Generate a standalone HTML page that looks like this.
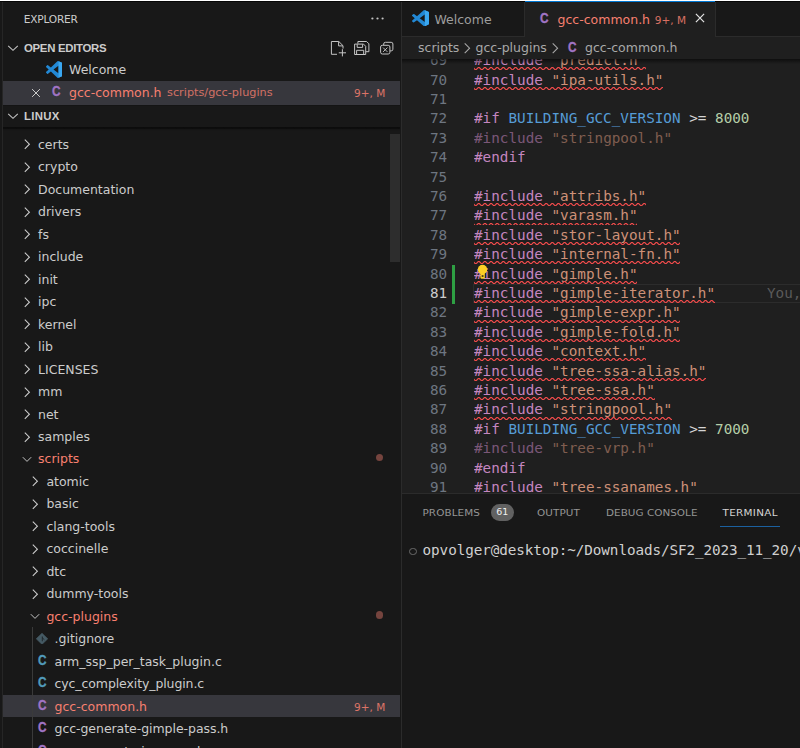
<!DOCTYPE html><html><head><meta charset="utf-8"><title>gcc-common.h - linux - Visual Studio Code</title><style>
html,body{margin:0;padding:0;background:#181818;}
body{width:800px;height:748px;overflow:hidden;position:relative;font-family:"DejaVu Sans", "Liberation Sans", sans-serif;color:#cccccc;}
.abs{position:absolute;}
.t{position:absolute;white-space:nowrap;line-height:1;}
#side{position:absolute;left:3px;top:0;width:398px;height:748px;background:#181818;overflow:hidden;}
#editor{position:absolute;left:402px;top:0;width:398px;height:748px;background:#1f1f1f;overflow:hidden;}
.row{position:absolute;left:0;width:397px;height:22.47px;}
.lbl{position:absolute;white-space:nowrap;font-size:12.5px;line-height:22.47px;top:1.1px;color:#cccccc;}
.err{color:#f88070;}
.ci{position:absolute;font-family:"Liberation Sans", "DejaVu Sans", sans-serif;font-weight:bold;font-size:14px;line-height:22.47px;top:-0.6px;transform:scaleX(0.84);transform-origin:0 50%;-webkit-text-stroke:0.35px currentColor;}
.ct{position:absolute;white-space:nowrap;line-height:1;font-family:"Liberation Sans", "DejaVu Sans", sans-serif;font-weight:bold;font-size:14px;transform:scaleX(0.84);transform-origin:0 50%;color:#a074c4;-webkit-text-stroke:0.35px #a074c4;}
.code{position:absolute;font-family:"DejaVu Sans Mono", "Liberation Mono", monospace;font-size:14.3px;line-height:19.405px;white-space:pre;transform:scaleY(1.045);transform-origin:0 75.6%;}
.ln{position:absolute;font-family:"DejaVu Sans Mono", "Liberation Mono", monospace;font-size:14.3px;line-height:19.405px;white-space:pre;color:#6e7681;text-align:right;width:40px;letter-spacing:-0.1px;transform:scaleY(1.045);transform-origin:0 75.6%;}
.k{color:#c586c0;} .s{color:#ce9178;} .m{color:#569cd6;} .n{color:#b5cea8;} .p{color:#d4d4d4;}
.dim{opacity:0.55;}
.ptab{position:absolute;white-space:nowrap;font-size:10.4px;line-height:1;color:#9d9d9d;transform:scaleY(0.89);transform-origin:0 80%;}
.badge{font-size:10.5px;opacity:0.85;}
</style></head><body>
<div class="abs" style="left:0;top:0;width:2px;height:748px;background:#181818"></div>
<div class="abs" style="left:2px;top:0;width:1px;height:748px;background:#262626"></div>
<div id="side">
<div class="t" style="left:20.7px;top:14px;font-size:10.6px;letter-spacing:-0.2px;color:#cccccc">EXPLORER</div>
<svg class="abs" style="left:366px;top:10px" width="17" height="17" viewBox="0 0 16 16"><circle cx="3.2" cy="8" r="1.05" fill="#c5c5c5"/><circle cx="8" cy="8" r="1.05" fill="#c5c5c5"/><circle cx="12.8" cy="8" r="1.05" fill="#c5c5c5"/></svg>
<svg class="abs" style="left:2.0999999999999996px;top:40.2px" width="16" height="16" viewBox="0 0 16 16"><path d="M3.2 5.9 L8 10.4 L12.8 5.9" fill="none" stroke="#c5c5c5" stroke-width="1.05"/></svg>
<div class="t" style="left:21px;top:42.7px;font-family:'Liberation Sans','DejaVu Sans',sans-serif;font-size:11.4px;font-weight:bold;letter-spacing:-0.3px;color:#cccccc">OPEN EDITORS</div>
<svg class="abs" style="left:322px;top:34px" width="75" height="28" viewBox="325 34 75 28" fill="none" stroke="#c5c5c5" stroke-width="1">
<path d="M337 54.3 H331.4 V41.5 H338.8 L343 45.7 V48.6"/><path d="M338.6 41.6 V45.9 H342.9"/><path d="M342.4 49.2 V56.4 M338.8 52.8 H346"/>
<path d="M357.9 43.6 V41.5 H366.6 L368.9 43.8 V51.7 H366"/><path d="M354.6 44.1 H363.5 L365.7 46.3 V54.5 H354.6 Z"/><path d="M357.2 44.3 V47.4 H362.6 V44.3"/><path d="M356.6 54.3 V50.3 H363.7 V54.3"/>
<path d="M383.7 45 V44 Q383.7 42.3 385.4 42.3 H391.2 Q392.9 42.3 392.9 44 V49.2 Q392.9 50.9 391.2 50.9 H390.1"/><rect x="380.6" y="45.3" width="9.3" height="8.7" rx="1.7"/><path d="M383.1 47.6 L387.4 51.9 M387.4 47.6 L383.1 51.9" stroke-width="0.95"/>
</svg>
<div class="row" style="top:58.2px">
<svg class="abs" style="left:42.9px;top:2.6px" width="16.6" height="17" viewBox="0 0 100 100" preserveAspectRatio="none"><path d="M96.46 10.8 L75.86 0.88 a6.23 6.23 0 0 0 -7.1 1.2 L29.35 38.04 12.17 25.01 a4.16 4.16 0 0 0 -5.3 .24 L1.36 30.26 a4.17 4.17 0 0 0 0 6.16 L16.25 50 1.36 63.58 a4.17 4.17 0 0 0 0 6.16 l5.5 5.01 a4.16 4.16 0 0 0 5.3 .24 L29.35 61.96 68.76 97.92 a6.22 6.22 0 0 0 7.1 1.2 l20.6 -9.9 A6.25 6.25 0 0 0 100 83.58 V16.42 a6.25 6.25 0 0 0 -3.54 -5.63z M75.01 72.7 L45.11 50 75.01 27.3z" fill="#2288d4" fill-rule="evenodd"/><path d="M75.86 0.88 L96.46 10.8 A6.25 6.25 0 0 1 100 16.42 V83.58 A6.25 6.25 0 0 1 96.46 89.2 L75.86 99.12 Z M75.01 27.3 V72.7Z" fill="#3aa7f0"/></svg>
<div class="lbl" style="left:66px">Welcome</div>
</div>
<div class="row" style="top:80.8px;background:#37373d;height:23.8px">
<svg class="abs" style="left:24.6px;top:3.9000000000000004px" width="16" height="16" viewBox="0 0 16 16"><path d="M4.1 4.1 L11.9 11.9 M11.9 4.1 L4.1 11.9" stroke="#cccccc" stroke-width="1.0" fill="none"/></svg>
<div class="ci" style="left:49px;color:#a074c4">C</div>
<div class="lbl err" style="left:66px">gcc-common.h</div>
<div class="lbl err" style="left:164px;font-size:11.3px;opacity:0.8">scripts/gcc-plugins</div>
<div class="lbl err badge" style="left:351px">9+, M</div>
</div>
<div class="abs" style="left:0;top:104.6px;width:397px;height:1px;background:#141414"></div>
<svg class="abs" style="left:2.0999999999999996px;top:107.8px" width="16" height="16" viewBox="0 0 16 16"><path d="M3.2 5.9 L8 10.4 L12.8 5.9" fill="none" stroke="#c5c5c5" stroke-width="1.05"/></svg>
<div class="t" style="left:21px;top:110.6px;font-family:'Liberation Sans','DejaVu Sans',sans-serif;font-size:11.4px;font-weight:bold;letter-spacing:0.3px;color:#cccccc">LINUX</div>
<div class="abs" style="left:0;top:126.8px;width:397px;height:4.5px;background:linear-gradient(#0b0b0b,#0d0d0d 38%,rgba(13,13,13,0.35) 55%,rgba(24,24,24,0))"></div>
<div class="row" style="top:132.80px;">
<svg class="abs" style="left:16.0px;top:3.63px" width="16" height="16" viewBox="0 0 16 16"><path d="M5.8 3.6 L10.4 8.2 L5.8 12.8" fill="none" stroke="#cfcfcf" stroke-width="1.05"/></svg>
<div class="lbl" style="left:35.0px">certs</div>
</div>
<div class="row" style="top:155.27px;">
<svg class="abs" style="left:16.0px;top:3.63px" width="16" height="16" viewBox="0 0 16 16"><path d="M5.8 3.6 L10.4 8.2 L5.8 12.8" fill="none" stroke="#cfcfcf" stroke-width="1.05"/></svg>
<div class="lbl" style="left:35.0px">crypto</div>
</div>
<div class="row" style="top:177.74px;">
<svg class="abs" style="left:16.0px;top:3.63px" width="16" height="16" viewBox="0 0 16 16"><path d="M5.8 3.6 L10.4 8.2 L5.8 12.8" fill="none" stroke="#cfcfcf" stroke-width="1.05"/></svg>
<div class="lbl" style="left:35.0px">Documentation</div>
</div>
<div class="row" style="top:200.21px;">
<svg class="abs" style="left:16.0px;top:3.63px" width="16" height="16" viewBox="0 0 16 16"><path d="M5.8 3.6 L10.4 8.2 L5.8 12.8" fill="none" stroke="#cfcfcf" stroke-width="1.05"/></svg>
<div class="lbl" style="left:35.0px">drivers</div>
</div>
<div class="row" style="top:222.68px;">
<svg class="abs" style="left:16.0px;top:3.63px" width="16" height="16" viewBox="0 0 16 16"><path d="M5.8 3.6 L10.4 8.2 L5.8 12.8" fill="none" stroke="#cfcfcf" stroke-width="1.05"/></svg>
<div class="lbl" style="left:35.0px">fs</div>
</div>
<div class="row" style="top:245.15px;">
<svg class="abs" style="left:16.0px;top:3.63px" width="16" height="16" viewBox="0 0 16 16"><path d="M5.8 3.6 L10.4 8.2 L5.8 12.8" fill="none" stroke="#cfcfcf" stroke-width="1.05"/></svg>
<div class="lbl" style="left:35.0px">include</div>
</div>
<div class="row" style="top:267.62px;">
<svg class="abs" style="left:16.0px;top:3.63px" width="16" height="16" viewBox="0 0 16 16"><path d="M5.8 3.6 L10.4 8.2 L5.8 12.8" fill="none" stroke="#cfcfcf" stroke-width="1.05"/></svg>
<div class="lbl" style="left:35.0px">init</div>
</div>
<div class="row" style="top:290.09px;">
<svg class="abs" style="left:16.0px;top:3.63px" width="16" height="16" viewBox="0 0 16 16"><path d="M5.8 3.6 L10.4 8.2 L5.8 12.8" fill="none" stroke="#cfcfcf" stroke-width="1.05"/></svg>
<div class="lbl" style="left:35.0px">ipc</div>
</div>
<div class="row" style="top:312.56px;">
<svg class="abs" style="left:16.0px;top:3.63px" width="16" height="16" viewBox="0 0 16 16"><path d="M5.8 3.6 L10.4 8.2 L5.8 12.8" fill="none" stroke="#cfcfcf" stroke-width="1.05"/></svg>
<div class="lbl" style="left:35.0px">kernel</div>
</div>
<div class="row" style="top:335.03px;">
<svg class="abs" style="left:16.0px;top:3.63px" width="16" height="16" viewBox="0 0 16 16"><path d="M5.8 3.6 L10.4 8.2 L5.8 12.8" fill="none" stroke="#cfcfcf" stroke-width="1.05"/></svg>
<div class="lbl" style="left:35.0px">lib</div>
</div>
<div class="row" style="top:357.50px;">
<svg class="abs" style="left:16.0px;top:3.63px" width="16" height="16" viewBox="0 0 16 16"><path d="M5.8 3.6 L10.4 8.2 L5.8 12.8" fill="none" stroke="#cfcfcf" stroke-width="1.05"/></svg>
<div class="lbl" style="left:35.0px">LICENSES</div>
</div>
<div class="row" style="top:379.97px;">
<svg class="abs" style="left:16.0px;top:3.63px" width="16" height="16" viewBox="0 0 16 16"><path d="M5.8 3.6 L10.4 8.2 L5.8 12.8" fill="none" stroke="#cfcfcf" stroke-width="1.05"/></svg>
<div class="lbl" style="left:35.0px">mm</div>
</div>
<div class="row" style="top:402.44px;">
<svg class="abs" style="left:16.0px;top:3.63px" width="16" height="16" viewBox="0 0 16 16"><path d="M5.8 3.6 L10.4 8.2 L5.8 12.8" fill="none" stroke="#cfcfcf" stroke-width="1.05"/></svg>
<div class="lbl" style="left:35.0px">net</div>
</div>
<div class="row" style="top:424.91px;">
<svg class="abs" style="left:16.0px;top:3.63px" width="16" height="16" viewBox="0 0 16 16"><path d="M5.8 3.6 L10.4 8.2 L5.8 12.8" fill="none" stroke="#cfcfcf" stroke-width="1.05"/></svg>
<div class="lbl" style="left:35.0px">samples</div>
</div>
<div class="row" style="top:447.38px;">
<svg class="abs" style="left:16.0px;top:3.63px" width="16" height="16" viewBox="0 0 16 16"><path d="M3.8 6.2 L8 10.4 L12.2 6.2" fill="none" stroke="#c5c5c5" stroke-width="1.0"/></svg>
<div class="lbl err" style="left:35.0px">scripts</div>
<div class="abs" style="left:373.3px;top:6.83px;width:7.2px;height:7.2px;border-radius:50%;background:#75443e"></div>
</div>
<div class="row" style="top:469.85px;">
<svg class="abs" style="left:24.4px;top:3.63px" width="16" height="16" viewBox="0 0 16 16"><path d="M5.8 3.6 L10.4 8.2 L5.8 12.8" fill="none" stroke="#cfcfcf" stroke-width="1.05"/></svg>
<div class="lbl" style="left:43.4px">atomic</div>
</div>
<div class="row" style="top:492.32px;">
<svg class="abs" style="left:24.4px;top:3.63px" width="16" height="16" viewBox="0 0 16 16"><path d="M5.8 3.6 L10.4 8.2 L5.8 12.8" fill="none" stroke="#cfcfcf" stroke-width="1.05"/></svg>
<div class="lbl" style="left:43.4px">basic</div>
</div>
<div class="row" style="top:514.79px;">
<svg class="abs" style="left:24.4px;top:3.63px" width="16" height="16" viewBox="0 0 16 16"><path d="M5.8 3.6 L10.4 8.2 L5.8 12.8" fill="none" stroke="#cfcfcf" stroke-width="1.05"/></svg>
<div class="lbl" style="left:43.4px">clang-tools</div>
</div>
<div class="row" style="top:537.26px;">
<svg class="abs" style="left:24.4px;top:3.63px" width="16" height="16" viewBox="0 0 16 16"><path d="M5.8 3.6 L10.4 8.2 L5.8 12.8" fill="none" stroke="#cfcfcf" stroke-width="1.05"/></svg>
<div class="lbl" style="left:43.4px">coccinelle</div>
</div>
<div class="row" style="top:559.73px;">
<svg class="abs" style="left:24.4px;top:3.63px" width="16" height="16" viewBox="0 0 16 16"><path d="M5.8 3.6 L10.4 8.2 L5.8 12.8" fill="none" stroke="#cfcfcf" stroke-width="1.05"/></svg>
<div class="lbl" style="left:43.4px">dtc</div>
</div>
<div class="row" style="top:582.20px;">
<svg class="abs" style="left:24.4px;top:3.63px" width="16" height="16" viewBox="0 0 16 16"><path d="M5.8 3.6 L10.4 8.2 L5.8 12.8" fill="none" stroke="#cfcfcf" stroke-width="1.05"/></svg>
<div class="lbl" style="left:43.4px">dummy-tools</div>
</div>
<div class="row" style="top:604.67px;">
<svg class="abs" style="left:24.4px;top:3.63px" width="16" height="16" viewBox="0 0 16 16"><path d="M3.8 6.2 L8 10.4 L12.2 6.2" fill="none" stroke="#c5c5c5" stroke-width="1.0"/></svg>
<div class="lbl err" style="left:43.4px">gcc-plugins</div>
<div class="abs" style="left:373.3px;top:6.83px;width:7.2px;height:7.2px;border-radius:50%;background:#75443e"></div>
</div>
<div class="row" style="top:627.14px;">
<svg class="abs" style="left:33px;top:5.54px" width="12" height="11.6" viewBox="0 0 12 12" preserveAspectRatio="none"><path d="M6 0.2 L11.8 6 L6 11.8 L0.2 6 Z" fill="#455a64" stroke="#455a64" stroke-width="0.6" stroke-linejoin="round"/><path d="M6.3 3.6 V8.6 M6.3 5 L8.4 7" stroke="#1b2226" stroke-width="0.9" fill="none"/></svg>
<div class="lbl" style="left:51.5px">.gitignore</div>
</div>
<div class="row" style="top:649.61px;">
<div class="ci" style="left:34.5px;color:#519aba">C</div>
<div class="lbl" style="left:51.5px">arm_ssp_per_task_plugin.c</div>
</div>
<div class="row" style="top:672.08px;">
<div class="ci" style="left:34.5px;color:#519aba">C</div>
<div class="lbl" style="left:51.5px;letter-spacing:-0.1px">cyc_complexity_plugin.c</div>
</div>
<div class="row" style="top:694.55px;background:#37373d;">
<div class="ci" style="left:34.5px;color:#a074c4">C</div>
<div class="lbl err" style="left:51.5px">gcc-common.h</div>
<div class="lbl err badge" style="left:351px">9+, M</div>
</div>
<div class="row" style="top:717.02px;">
<div class="ci" style="left:34.5px;color:#a074c4">C</div>
<div class="lbl" style="left:51.5px;letter-spacing:-0.05px">gcc-generate-gimple-pass.h</div>
</div>
<div class="row" style="top:739.49px;">
<div class="ci" style="left:34.5px;color:#a074c4">C</div>
<div class="lbl" style="left:51.5px;letter-spacing:-0.05px">gcc-generate-ipa-pass.h</div>
</div>
<div class="abs" style="left:29px;top:627.14px;width:1.2px;height:200px;background:#3a3a3a"></div>
<div class="abs" style="left:387px;top:134.2px;width:10px;height:127.6px;background:#2d2d2d"></div>
</div>
<div class="abs" style="left:400.9px;top:0;width:1.15px;height:748px;background:#2b2b2b"></div>
<div id="editor">
<div class="abs" style="left:0;top:0;width:400px;height:36px;background:#181818"></div>
<div class="abs" style="left:0;top:36px;width:400px;height:1px;background:#2b2b2b"></div>
<svg class="abs" style="left:9.800000000000011px;top:9.7px" width="17" height="16.4" viewBox="0 0 100 100" preserveAspectRatio="none"><path d="M96.46 10.8 L75.86 0.88 a6.23 6.23 0 0 0 -7.1 1.2 L29.35 38.04 12.17 25.01 a4.16 4.16 0 0 0 -5.3 .24 L1.36 30.26 a4.17 4.17 0 0 0 0 6.16 L16.25 50 1.36 63.58 a4.17 4.17 0 0 0 0 6.16 l5.5 5.01 a4.16 4.16 0 0 0 5.3 .24 L29.35 61.96 68.76 97.92 a6.22 6.22 0 0 0 7.1 1.2 l20.6 -9.9 A6.25 6.25 0 0 0 100 83.58 V16.42 a6.25 6.25 0 0 0 -3.54 -5.63z M75.01 72.7 L45.11 50 75.01 27.3z" fill="#2288d4" fill-rule="evenodd"/><path d="M75.86 0.88 L96.46 10.8 A6.25 6.25 0 0 1 100 16.42 V83.58 A6.25 6.25 0 0 1 96.46 89.2 L75.86 99.12 Z M75.01 27.3 V72.7Z" fill="#3aa7f0"/></svg>
<div class="t" style="left:32.39999999999998px;top:13.7px;font-size:12.5px;color:#9d9d9d">Welcome</div>
<div class="abs" style="left:122px;top:0;width:1px;height:36.5px;background:#2b2b2b"></div>
<div class="abs" style="left:123px;top:0;width:190px;height:37px;background:#1f1f1f"></div>
<div class="abs" style="left:313px;top:0;width:1px;height:36.5px;background:#2b2b2b"></div>
<div class="ct" style="left:137.79999999999995px;top:11.2px">C</div>
<div class="t err" style="left:155.5px;top:13.7px;font-size:12.5px">gcc-common.h</div>
<div class="t err badge" style="left:252.79999999999995px;top:14.5px">9+, M</div>
<svg class="abs" style="left:290.4px;top:10.2px" width="16" height="16" viewBox="0 0 16 16"><path d="M3.9000000000000004 3.9000000000000004 L12.1 12.1 M12.1 3.9000000000000004 L3.9000000000000004 12.1" stroke="#e4e4e4" stroke-width="1.2" fill="none"/></svg>
<div class="abs" style="left:0;top:37px;width:400px;height:21.5px;background:#1f1f1f"></div>
<div class="t" style="left:16px;top:42.4px;font-size:12.5px;color:#a9a9a9">scripts</div>
<svg class="abs" style="left:57px;top:40.3px" width="16" height="16" viewBox="0 0 16 16"><path d="M5.7 3.3 L10.6 8.2 L5.7 13.1" fill="none" stroke="#a9a9a9" stroke-width="1.05"/></svg>
<div class="t" style="left:73.5px;top:42.4px;font-size:12.5px;color:#a9a9a9">gcc-plugins</div>
<svg class="abs" style="left:145px;top:40.3px" width="16" height="16" viewBox="0 0 16 16"><path d="M5.7 3.3 L10.6 8.2 L5.7 13.1" fill="none" stroke="#a9a9a9" stroke-width="1.05"/></svg>
<div class="ct" style="left:166px;top:40.4px">C</div>
<div class="t" style="left:183px;top:42.4px;font-size:12.5px;color:#a9a9a9">gcc-common.h</div>
<div class="abs" id="codeclip" style="left:0;top:58.5px;width:400px;height:434.5px;overflow:hidden;background:#1f1f1f">
<div class="abs" style="left:71.39999999999998px;top:225.00px;width:360px;height:19.01px;box-sizing:border-box;border:1.1px solid #2c2c2c"></div>
<div class="abs" style="left:50px;top:206.35px;width:3.2px;height:38.81px;background:#2ea043"></div>
<div class="ln" style="left:4.9px;top:-7.31px;color:#6e7681">69</div>
<div class="code" style="left:72px;top:-7.31px"><span class="k">#include</span> <span class="s">"predict.h"</span></div>
<svg class="abs" style="left:71.80px;top:8.80px" width="172.2" height="2.96" viewBox="0 0 168.61 2.9" preserveAspectRatio="none"><path d="M-1.3 0 L1.7 3 L4.7 0 L7.7 3 L10.7 0 L13.7 3 L16.7 0 L19.7 3 L22.7 0 L25.7 3 L28.7 0 L31.7 3 L34.7 0 L37.7 3 L40.7 0 L43.7 3 L46.7 0 L49.7 3 L52.7 0 L55.7 3 L58.7 0 L61.7 3 L64.7 0 L67.7 3 L70.7 0 L73.7 3 L76.7 0 L79.7 3 L82.7 0 L85.7 3 L88.7 0 L91.7 3 L94.7 0 L97.7 3 L100.7 0 L103.7 3 L106.7 0 L109.7 3 L112.7 0 L115.7 3 L118.7 0 L121.7 3 L124.7 0 L127.7 3 L130.7 0 L133.7 3 L136.7 0 L139.7 3 L142.7 0 L145.7 3 L148.7 0 L151.7 3 L154.7 0 L157.7 3 L160.7 0 L163.7 3 L166.7 0 L169.7 3" fill="none" stroke="#f14c4c" stroke-width="1.15"/></svg>
<div class="ln" style="left:4.9px;top:12.10px;color:#6e7681">70</div>
<div class="code" style="left:72px;top:12.10px"><span class="k">#include</span> <span class="s">"ipa-utils.h"</span></div>
<svg class="abs" style="left:71.80px;top:28.20px" width="189.4" height="2.96" viewBox="0 0 185.47 2.9" preserveAspectRatio="none"><path d="M-1.3 0 L1.7 3 L4.7 0 L7.7 3 L10.7 0 L13.7 3 L16.7 0 L19.7 3 L22.7 0 L25.7 3 L28.7 0 L31.7 3 L34.7 0 L37.7 3 L40.7 0 L43.7 3 L46.7 0 L49.7 3 L52.7 0 L55.7 3 L58.7 0 L61.7 3 L64.7 0 L67.7 3 L70.7 0 L73.7 3 L76.7 0 L79.7 3 L82.7 0 L85.7 3 L88.7 0 L91.7 3 L94.7 0 L97.7 3 L100.7 0 L103.7 3 L106.7 0 L109.7 3 L112.7 0 L115.7 3 L118.7 0 L121.7 3 L124.7 0 L127.7 3 L130.7 0 L133.7 3 L136.7 0 L139.7 3 L142.7 0 L145.7 3 L148.7 0 L151.7 3 L154.7 0 L157.7 3 L160.7 0 L163.7 3 L166.7 0 L169.7 3 L172.7 0 L175.7 3 L178.7 0 L181.7 3 L184.7 0 L187.7 3" fill="none" stroke="#f14c4c" stroke-width="1.15"/></svg>
<div class="ln" style="left:4.9px;top:31.50px;color:#6e7681">71</div>
<div class="ln" style="left:4.9px;top:50.91px;color:#6e7681">72</div>
<div class="code" style="left:72px;top:50.91px"><span class="k">#if</span> <span class="m">BUILDING_GCC_VERSION</span> <span class="p">&gt;=</span> <span class="n">8000</span></div>
<div class="ln" style="left:4.9px;top:70.31px;color:#6e7681">73</div>
<div class="code dim" style="left:72px;top:70.31px"><span class="k">#include</span> <span class="s">"stringpool.h"</span></div>
<div class="ln" style="left:4.9px;top:89.72px;color:#6e7681">74</div>
<div class="code" style="left:72px;top:89.72px"><span class="k">#endif</span></div>
<div class="ln" style="left:4.9px;top:109.12px;color:#6e7681">75</div>
<div class="ln" style="left:4.9px;top:128.53px;color:#6e7681">76</div>
<div class="code" style="left:72px;top:128.53px"><span class="k">#include</span> <span class="s">"attribs.h"</span></div>
<svg class="abs" style="left:71.80px;top:144.63px" width="172.2" height="2.96" viewBox="0 0 168.61 2.9" preserveAspectRatio="none"><path d="M-1.3 0 L1.7 3 L4.7 0 L7.7 3 L10.7 0 L13.7 3 L16.7 0 L19.7 3 L22.7 0 L25.7 3 L28.7 0 L31.7 3 L34.7 0 L37.7 3 L40.7 0 L43.7 3 L46.7 0 L49.7 3 L52.7 0 L55.7 3 L58.7 0 L61.7 3 L64.7 0 L67.7 3 L70.7 0 L73.7 3 L76.7 0 L79.7 3 L82.7 0 L85.7 3 L88.7 0 L91.7 3 L94.7 0 L97.7 3 L100.7 0 L103.7 3 L106.7 0 L109.7 3 L112.7 0 L115.7 3 L118.7 0 L121.7 3 L124.7 0 L127.7 3 L130.7 0 L133.7 3 L136.7 0 L139.7 3 L142.7 0 L145.7 3 L148.7 0 L151.7 3 L154.7 0 L157.7 3 L160.7 0 L163.7 3 L166.7 0 L169.7 3" fill="none" stroke="#f14c4c" stroke-width="1.15"/></svg>
<div class="ln" style="left:4.9px;top:147.94px;color:#6e7681">77</div>
<div class="code" style="left:72px;top:147.94px"><span class="k">#include</span> <span class="s">"varasm.h"</span></div>
<svg class="abs" style="left:71.80px;top:164.04px" width="163.6" height="2.96" viewBox="0 0 160.18 2.9" preserveAspectRatio="none"><path d="M-1.3 0 L1.7 3 L4.7 0 L7.7 3 L10.7 0 L13.7 3 L16.7 0 L19.7 3 L22.7 0 L25.7 3 L28.7 0 L31.7 3 L34.7 0 L37.7 3 L40.7 0 L43.7 3 L46.7 0 L49.7 3 L52.7 0 L55.7 3 L58.7 0 L61.7 3 L64.7 0 L67.7 3 L70.7 0 L73.7 3 L76.7 0 L79.7 3 L82.7 0 L85.7 3 L88.7 0 L91.7 3 L94.7 0 L97.7 3 L100.7 0 L103.7 3 L106.7 0 L109.7 3 L112.7 0 L115.7 3 L118.7 0 L121.7 3 L124.7 0 L127.7 3 L130.7 0 L133.7 3 L136.7 0 L139.7 3 L142.7 0 L145.7 3 L148.7 0 L151.7 3 L154.7 0 L157.7 3 L160.7 0" fill="none" stroke="#f14c4c" stroke-width="1.15"/></svg>
<div class="ln" style="left:4.9px;top:167.34px;color:#6e7681">78</div>
<div class="code" style="left:72px;top:167.34px"><span class="k">#include</span> <span class="s">"stor-layout.h"</span></div>
<svg class="abs" style="left:71.80px;top:183.44px" width="206.6" height="2.96" viewBox="0 0 202.33 2.9" preserveAspectRatio="none"><path d="M-1.3 0 L1.7 3 L4.7 0 L7.7 3 L10.7 0 L13.7 3 L16.7 0 L19.7 3 L22.7 0 L25.7 3 L28.7 0 L31.7 3 L34.7 0 L37.7 3 L40.7 0 L43.7 3 L46.7 0 L49.7 3 L52.7 0 L55.7 3 L58.7 0 L61.7 3 L64.7 0 L67.7 3 L70.7 0 L73.7 3 L76.7 0 L79.7 3 L82.7 0 L85.7 3 L88.7 0 L91.7 3 L94.7 0 L97.7 3 L100.7 0 L103.7 3 L106.7 0 L109.7 3 L112.7 0 L115.7 3 L118.7 0 L121.7 3 L124.7 0 L127.7 3 L130.7 0 L133.7 3 L136.7 0 L139.7 3 L142.7 0 L145.7 3 L148.7 0 L151.7 3 L154.7 0 L157.7 3 L160.7 0 L163.7 3 L166.7 0 L169.7 3 L172.7 0 L175.7 3 L178.7 0 L181.7 3 L184.7 0 L187.7 3 L190.7 0 L193.7 3 L196.7 0 L199.7 3 L202.7 0" fill="none" stroke="#f14c4c" stroke-width="1.15"/></svg>
<div class="ln" style="left:4.9px;top:186.75px;color:#6e7681">79</div>
<div class="code" style="left:72px;top:186.75px"><span class="k">#include</span> <span class="s">"internal-fn.h"</span></div>
<svg class="abs" style="left:71.80px;top:202.85px" width="206.6" height="2.96" viewBox="0 0 202.33 2.9" preserveAspectRatio="none"><path d="M-1.3 0 L1.7 3 L4.7 0 L7.7 3 L10.7 0 L13.7 3 L16.7 0 L19.7 3 L22.7 0 L25.7 3 L28.7 0 L31.7 3 L34.7 0 L37.7 3 L40.7 0 L43.7 3 L46.7 0 L49.7 3 L52.7 0 L55.7 3 L58.7 0 L61.7 3 L64.7 0 L67.7 3 L70.7 0 L73.7 3 L76.7 0 L79.7 3 L82.7 0 L85.7 3 L88.7 0 L91.7 3 L94.7 0 L97.7 3 L100.7 0 L103.7 3 L106.7 0 L109.7 3 L112.7 0 L115.7 3 L118.7 0 L121.7 3 L124.7 0 L127.7 3 L130.7 0 L133.7 3 L136.7 0 L139.7 3 L142.7 0 L145.7 3 L148.7 0 L151.7 3 L154.7 0 L157.7 3 L160.7 0 L163.7 3 L166.7 0 L169.7 3 L172.7 0 L175.7 3 L178.7 0 L181.7 3 L184.7 0 L187.7 3 L190.7 0 L193.7 3 L196.7 0 L199.7 3 L202.7 0" fill="none" stroke="#f14c4c" stroke-width="1.15"/></svg>
<div class="ln" style="left:4.9px;top:206.15px;color:#6e7681">80</div>
<div class="code" style="left:72px;top:206.15px"><span class="k">#include</span> <span class="s">"gimple.h"</span></div>
<svg class="abs" style="left:71.80px;top:222.25px" width="163.6" height="2.96" viewBox="0 0 160.18 2.9" preserveAspectRatio="none"><path d="M-1.3 0 L1.7 3 L4.7 0 L7.7 3 L10.7 0 L13.7 3 L16.7 0 L19.7 3 L22.7 0 L25.7 3 L28.7 0 L31.7 3 L34.7 0 L37.7 3 L40.7 0 L43.7 3 L46.7 0 L49.7 3 L52.7 0 L55.7 3 L58.7 0 L61.7 3 L64.7 0 L67.7 3 L70.7 0 L73.7 3 L76.7 0 L79.7 3 L82.7 0 L85.7 3 L88.7 0 L91.7 3 L94.7 0 L97.7 3 L100.7 0 L103.7 3 L106.7 0 L109.7 3 L112.7 0 L115.7 3 L118.7 0 L121.7 3 L124.7 0 L127.7 3 L130.7 0 L133.7 3 L136.7 0 L139.7 3 L142.7 0 L145.7 3 L148.7 0 L151.7 3 L154.7 0 L157.7 3 L160.7 0" fill="none" stroke="#f14c4c" stroke-width="1.15"/></svg>
<div class="ln" style="left:4.9px;top:225.56px;color:#cccccc">81</div>
<div class="code" style="left:72px;top:225.56px"><span class="k">#include</span> <span class="s">"gimple-iterator.h"</span></div>
<svg class="abs" style="left:71.80px;top:241.66px" width="241.1" height="2.96" viewBox="0 0 236.05 2.9" preserveAspectRatio="none"><path d="M-1.3 0 L1.7 3 L4.7 0 L7.7 3 L10.7 0 L13.7 3 L16.7 0 L19.7 3 L22.7 0 L25.7 3 L28.7 0 L31.7 3 L34.7 0 L37.7 3 L40.7 0 L43.7 3 L46.7 0 L49.7 3 L52.7 0 L55.7 3 L58.7 0 L61.7 3 L64.7 0 L67.7 3 L70.7 0 L73.7 3 L76.7 0 L79.7 3 L82.7 0 L85.7 3 L88.7 0 L91.7 3 L94.7 0 L97.7 3 L100.7 0 L103.7 3 L106.7 0 L109.7 3 L112.7 0 L115.7 3 L118.7 0 L121.7 3 L124.7 0 L127.7 3 L130.7 0 L133.7 3 L136.7 0 L139.7 3 L142.7 0 L145.7 3 L148.7 0 L151.7 3 L154.7 0 L157.7 3 L160.7 0 L163.7 3 L166.7 0 L169.7 3 L172.7 0 L175.7 3 L178.7 0 L181.7 3 L184.7 0 L187.7 3 L190.7 0 L193.7 3 L196.7 0 L199.7 3 L202.7 0 L205.7 3 L208.7 0 L211.7 3 L214.7 0 L217.7 3 L220.7 0 L223.7 3 L226.7 0 L229.7 3 L232.7 0 L235.7 3 L238.7 0" fill="none" stroke="#f14c4c" stroke-width="1.15"/></svg>
<div class="ln" style="left:4.9px;top:244.96px;color:#6e7681">82</div>
<div class="code" style="left:72px;top:244.96px"><span class="k">#include</span> <span class="s">"gimple-expr.h"</span></div>
<svg class="abs" style="left:71.80px;top:261.06px" width="206.6" height="2.96" viewBox="0 0 202.33 2.9" preserveAspectRatio="none"><path d="M-1.3 0 L1.7 3 L4.7 0 L7.7 3 L10.7 0 L13.7 3 L16.7 0 L19.7 3 L22.7 0 L25.7 3 L28.7 0 L31.7 3 L34.7 0 L37.7 3 L40.7 0 L43.7 3 L46.7 0 L49.7 3 L52.7 0 L55.7 3 L58.7 0 L61.7 3 L64.7 0 L67.7 3 L70.7 0 L73.7 3 L76.7 0 L79.7 3 L82.7 0 L85.7 3 L88.7 0 L91.7 3 L94.7 0 L97.7 3 L100.7 0 L103.7 3 L106.7 0 L109.7 3 L112.7 0 L115.7 3 L118.7 0 L121.7 3 L124.7 0 L127.7 3 L130.7 0 L133.7 3 L136.7 0 L139.7 3 L142.7 0 L145.7 3 L148.7 0 L151.7 3 L154.7 0 L157.7 3 L160.7 0 L163.7 3 L166.7 0 L169.7 3 L172.7 0 L175.7 3 L178.7 0 L181.7 3 L184.7 0 L187.7 3 L190.7 0 L193.7 3 L196.7 0 L199.7 3 L202.7 0" fill="none" stroke="#f14c4c" stroke-width="1.15"/></svg>
<div class="ln" style="left:4.9px;top:264.37px;color:#6e7681">83</div>
<div class="code" style="left:72px;top:264.37px"><span class="k">#include</span> <span class="s">"gimple-fold.h"</span></div>
<svg class="abs" style="left:71.80px;top:280.47px" width="206.6" height="2.96" viewBox="0 0 202.33 2.9" preserveAspectRatio="none"><path d="M-1.3 0 L1.7 3 L4.7 0 L7.7 3 L10.7 0 L13.7 3 L16.7 0 L19.7 3 L22.7 0 L25.7 3 L28.7 0 L31.7 3 L34.7 0 L37.7 3 L40.7 0 L43.7 3 L46.7 0 L49.7 3 L52.7 0 L55.7 3 L58.7 0 L61.7 3 L64.7 0 L67.7 3 L70.7 0 L73.7 3 L76.7 0 L79.7 3 L82.7 0 L85.7 3 L88.7 0 L91.7 3 L94.7 0 L97.7 3 L100.7 0 L103.7 3 L106.7 0 L109.7 3 L112.7 0 L115.7 3 L118.7 0 L121.7 3 L124.7 0 L127.7 3 L130.7 0 L133.7 3 L136.7 0 L139.7 3 L142.7 0 L145.7 3 L148.7 0 L151.7 3 L154.7 0 L157.7 3 L160.7 0 L163.7 3 L166.7 0 L169.7 3 L172.7 0 L175.7 3 L178.7 0 L181.7 3 L184.7 0 L187.7 3 L190.7 0 L193.7 3 L196.7 0 L199.7 3 L202.7 0" fill="none" stroke="#f14c4c" stroke-width="1.15"/></svg>
<div class="ln" style="left:4.9px;top:283.77px;color:#6e7681">84</div>
<div class="code" style="left:72px;top:283.77px"><span class="k">#include</span> <span class="s">"context.h"</span></div>
<svg class="abs" style="left:71.80px;top:299.87px" width="172.2" height="2.96" viewBox="0 0 168.61 2.9" preserveAspectRatio="none"><path d="M-1.3 0 L1.7 3 L4.7 0 L7.7 3 L10.7 0 L13.7 3 L16.7 0 L19.7 3 L22.7 0 L25.7 3 L28.7 0 L31.7 3 L34.7 0 L37.7 3 L40.7 0 L43.7 3 L46.7 0 L49.7 3 L52.7 0 L55.7 3 L58.7 0 L61.7 3 L64.7 0 L67.7 3 L70.7 0 L73.7 3 L76.7 0 L79.7 3 L82.7 0 L85.7 3 L88.7 0 L91.7 3 L94.7 0 L97.7 3 L100.7 0 L103.7 3 L106.7 0 L109.7 3 L112.7 0 L115.7 3 L118.7 0 L121.7 3 L124.7 0 L127.7 3 L130.7 0 L133.7 3 L136.7 0 L139.7 3 L142.7 0 L145.7 3 L148.7 0 L151.7 3 L154.7 0 L157.7 3 L160.7 0 L163.7 3 L166.7 0 L169.7 3" fill="none" stroke="#f14c4c" stroke-width="1.15"/></svg>
<div class="ln" style="left:4.9px;top:303.18px;color:#6e7681">85</div>
<div class="code" style="left:72px;top:303.18px"><span class="k">#include</span> <span class="s">"tree-ssa-alias.h"</span></div>
<svg class="abs" style="left:71.80px;top:319.28px" width="232.5" height="2.96" viewBox="0 0 227.62 2.9" preserveAspectRatio="none"><path d="M-1.3 0 L1.7 3 L4.7 0 L7.7 3 L10.7 0 L13.7 3 L16.7 0 L19.7 3 L22.7 0 L25.7 3 L28.7 0 L31.7 3 L34.7 0 L37.7 3 L40.7 0 L43.7 3 L46.7 0 L49.7 3 L52.7 0 L55.7 3 L58.7 0 L61.7 3 L64.7 0 L67.7 3 L70.7 0 L73.7 3 L76.7 0 L79.7 3 L82.7 0 L85.7 3 L88.7 0 L91.7 3 L94.7 0 L97.7 3 L100.7 0 L103.7 3 L106.7 0 L109.7 3 L112.7 0 L115.7 3 L118.7 0 L121.7 3 L124.7 0 L127.7 3 L130.7 0 L133.7 3 L136.7 0 L139.7 3 L142.7 0 L145.7 3 L148.7 0 L151.7 3 L154.7 0 L157.7 3 L160.7 0 L163.7 3 L166.7 0 L169.7 3 L172.7 0 L175.7 3 L178.7 0 L181.7 3 L184.7 0 L187.7 3 L190.7 0 L193.7 3 L196.7 0 L199.7 3 L202.7 0 L205.7 3 L208.7 0 L211.7 3 L214.7 0 L217.7 3 L220.7 0 L223.7 3 L226.7 0 L229.7 3" fill="none" stroke="#f14c4c" stroke-width="1.15"/></svg>
<div class="ln" style="left:4.9px;top:322.58px;color:#6e7681">86</div>
<div class="code" style="left:72px;top:322.58px"><span class="k">#include</span> <span class="s">"tree-ssa.h"</span></div>
<svg class="abs" style="left:71.80px;top:338.69px" width="180.8" height="2.96" viewBox="0 0 177.04 2.9" preserveAspectRatio="none"><path d="M-1.3 0 L1.7 3 L4.7 0 L7.7 3 L10.7 0 L13.7 3 L16.7 0 L19.7 3 L22.7 0 L25.7 3 L28.7 0 L31.7 3 L34.7 0 L37.7 3 L40.7 0 L43.7 3 L46.7 0 L49.7 3 L52.7 0 L55.7 3 L58.7 0 L61.7 3 L64.7 0 L67.7 3 L70.7 0 L73.7 3 L76.7 0 L79.7 3 L82.7 0 L85.7 3 L88.7 0 L91.7 3 L94.7 0 L97.7 3 L100.7 0 L103.7 3 L106.7 0 L109.7 3 L112.7 0 L115.7 3 L118.7 0 L121.7 3 L124.7 0 L127.7 3 L130.7 0 L133.7 3 L136.7 0 L139.7 3 L142.7 0 L145.7 3 L148.7 0 L151.7 3 L154.7 0 L157.7 3 L160.7 0 L163.7 3 L166.7 0 L169.7 3 L172.7 0 L175.7 3 L178.7 0" fill="none" stroke="#f14c4c" stroke-width="1.15"/></svg>
<div class="ln" style="left:4.9px;top:341.99px;color:#6e7681">87</div>
<div class="code" style="left:72px;top:341.99px"><span class="k">#include</span> <span class="s">"stringpool.h"</span></div>
<svg class="abs" style="left:71.80px;top:358.09px" width="198.0" height="2.96" viewBox="0 0 193.90 2.9" preserveAspectRatio="none"><path d="M-1.3 0 L1.7 3 L4.7 0 L7.7 3 L10.7 0 L13.7 3 L16.7 0 L19.7 3 L22.7 0 L25.7 3 L28.7 0 L31.7 3 L34.7 0 L37.7 3 L40.7 0 L43.7 3 L46.7 0 L49.7 3 L52.7 0 L55.7 3 L58.7 0 L61.7 3 L64.7 0 L67.7 3 L70.7 0 L73.7 3 L76.7 0 L79.7 3 L82.7 0 L85.7 3 L88.7 0 L91.7 3 L94.7 0 L97.7 3 L100.7 0 L103.7 3 L106.7 0 L109.7 3 L112.7 0 L115.7 3 L118.7 0 L121.7 3 L124.7 0 L127.7 3 L130.7 0 L133.7 3 L136.7 0 L139.7 3 L142.7 0 L145.7 3 L148.7 0 L151.7 3 L154.7 0 L157.7 3 L160.7 0 L163.7 3 L166.7 0 L169.7 3 L172.7 0 L175.7 3 L178.7 0 L181.7 3 L184.7 0 L187.7 3 L190.7 0 L193.7 3 L196.7 0" fill="none" stroke="#f14c4c" stroke-width="1.15"/></svg>
<div class="ln" style="left:4.9px;top:361.39px;color:#6e7681">88</div>
<div class="code" style="left:72px;top:361.39px"><span class="k">#if</span> <span class="m">BUILDING_GCC_VERSION</span> <span class="p">&gt;=</span> <span class="n">7000</span></div>
<div class="ln" style="left:4.9px;top:380.80px;color:#6e7681">89</div>
<div class="code dim" style="left:72px;top:380.80px"><span class="k">#include</span> <span class="s">"tree-vrp.h"</span></div>
<div class="ln" style="left:4.9px;top:400.20px;color:#6e7681">90</div>
<div class="code" style="left:72px;top:400.20px"><span class="k">#endif</span></div>
<div class="ln" style="left:4.9px;top:419.61px;color:#6e7681">91</div>
<div class="code" style="left:72px;top:419.61px"><span class="k">#include</span> <span class="s">"tree-ssanames.h"</span></div>
<svg class="abs" style="left:71.80px;top:435.71px" width="223.9" height="2.96" viewBox="0 0 219.19 2.9" preserveAspectRatio="none"><path d="M-1.3 0 L1.7 3 L4.7 0 L7.7 3 L10.7 0 L13.7 3 L16.7 0 L19.7 3 L22.7 0 L25.7 3 L28.7 0 L31.7 3 L34.7 0 L37.7 3 L40.7 0 L43.7 3 L46.7 0 L49.7 3 L52.7 0 L55.7 3 L58.7 0 L61.7 3 L64.7 0 L67.7 3 L70.7 0 L73.7 3 L76.7 0 L79.7 3 L82.7 0 L85.7 3 L88.7 0 L91.7 3 L94.7 0 L97.7 3 L100.7 0 L103.7 3 L106.7 0 L109.7 3 L112.7 0 L115.7 3 L118.7 0 L121.7 3 L124.7 0 L127.7 3 L130.7 0 L133.7 3 L136.7 0 L139.7 3 L142.7 0 L145.7 3 L148.7 0 L151.7 3 L154.7 0 L157.7 3 L160.7 0 L163.7 3 L166.7 0 L169.7 3 L172.7 0 L175.7 3 L178.7 0 L181.7 3 L184.7 0 L187.7 3 L190.7 0 L193.7 3 L196.7 0 L199.7 3 L202.7 0 L205.7 3 L208.7 0 L211.7 3 L214.7 0 L217.7 3 L220.7 0" fill="none" stroke="#f14c4c" stroke-width="1.15"/></svg>
<div class="ln" style="left:4.9px;top:439.01px;color:#6e7681">92</div>
<div class="code" style="left:72px;top:439.01px"><span class="k">#include</span> <span class="s">"tree-ssanames.h"</span></div>
<svg class="abs" style="left:71.80px;top:455.11px" width="223.9" height="2.96" viewBox="0 0 219.19 2.9" preserveAspectRatio="none"><path d="M-1.3 0 L1.7 3 L4.7 0 L7.7 3 L10.7 0 L13.7 3 L16.7 0 L19.7 3 L22.7 0 L25.7 3 L28.7 0 L31.7 3 L34.7 0 L37.7 3 L40.7 0 L43.7 3 L46.7 0 L49.7 3 L52.7 0 L55.7 3 L58.7 0 L61.7 3 L64.7 0 L67.7 3 L70.7 0 L73.7 3 L76.7 0 L79.7 3 L82.7 0 L85.7 3 L88.7 0 L91.7 3 L94.7 0 L97.7 3 L100.7 0 L103.7 3 L106.7 0 L109.7 3 L112.7 0 L115.7 3 L118.7 0 L121.7 3 L124.7 0 L127.7 3 L130.7 0 L133.7 3 L136.7 0 L139.7 3 L142.7 0 L145.7 3 L148.7 0 L151.7 3 L154.7 0 L157.7 3 L160.7 0 L163.7 3 L166.7 0 L169.7 3 L172.7 0 L175.7 3 L178.7 0 L181.7 3 L184.7 0 L187.7 3 L190.7 0 L193.7 3 L196.7 0 L199.7 3 L202.7 0 L205.7 3 L208.7 0 L211.7 3 L214.7 0 L217.7 3 L220.7 0" fill="none" stroke="#f14c4c" stroke-width="1.15"/></svg>
<div class="code" style="left:365px;top:225.56px;color:#5a5a5a">You, 2 months ago</div>
<svg class="abs" style="left:74px;top:204.5px" width="14" height="18" viewBox="476 263 14 18"><circle cx="482.5" cy="269.5" r="4.75" fill="#fccf26"/><path d="M480.4 272.5 H484.8 V277.6 Q484.8 278.8 483.6 278.8 H481.6 Q480.4 278.8 480.4 277.6 Z" fill="#fccf26"/><rect x="481.7" y="275.2" width="1.8" height="1.7" fill="#3a2f1a"/></svg>
<div class="abs" style="left:0;top:0;width:400px;height:5px;background:linear-gradient(rgba(0,0,0,0.55),rgba(0,0,0,0))"></div>
</div>
<div class="abs" style="left:0;top:493px;width:400px;height:256px;background:#181818;border-top:1.1px solid #2b2b2b"></div>
<div class="ptab" style="left:20.5px;top:507.2px;letter-spacing:0.1px;color:#959595">PROBLEMS</div>
<div class="abs" style="left:89px;top:503.5px;width:23.1px;height:17.3px;border-radius:8.6px;background:#616161"></div>
<div class="t" style="left:89px;top:507.1px;width:22.4px;text-align:center;font-size:9.5px;transform:scaleY(0.94);color:#f0f0f0">61</div>
<div class="ptab" style="left:135px;top:507.2px;letter-spacing:0.1px;color:#959595">OUTPUT</div>
<div class="ptab" style="left:204px;top:507.2px;letter-spacing:0.04px;color:#959595">DEBUG CONSOLE</div>
<div class="ptab" style="left:320.5px;top:507.2px;letter-spacing:0.3px;color:#d4d4d4">TERMINAL</div>
<div class="abs" style="left:318px;top:525.8px;width:59.5px;height:1px;background:#1b609f"></div>
<div class="abs" style="left:7.300000000000011px;top:547.6px;width:5.8px;height:5.8px;border-radius:50%;border:1.1px solid #6b6b6b"></div>
<div class="code" style="left:20.600000000000023px;top:541.1px;color:#d0d0d0;letter-spacing:-0.095px">opvolger@desktop:~/Downloads/SF2_2023_11_20/vscode-linux-riscv64</div>
</div>
<div class="abs" style="left:0;top:0;width:800px;height:1px;background:#fff"></div>
<div class="abs" style="left:0;top:1px;width:800px;height:1px;background:#060606"></div>
<div class="abs" style="left:525px;top:1px;width:190px;height:1.2px;background:#0078d4"></div>
</body></html>
